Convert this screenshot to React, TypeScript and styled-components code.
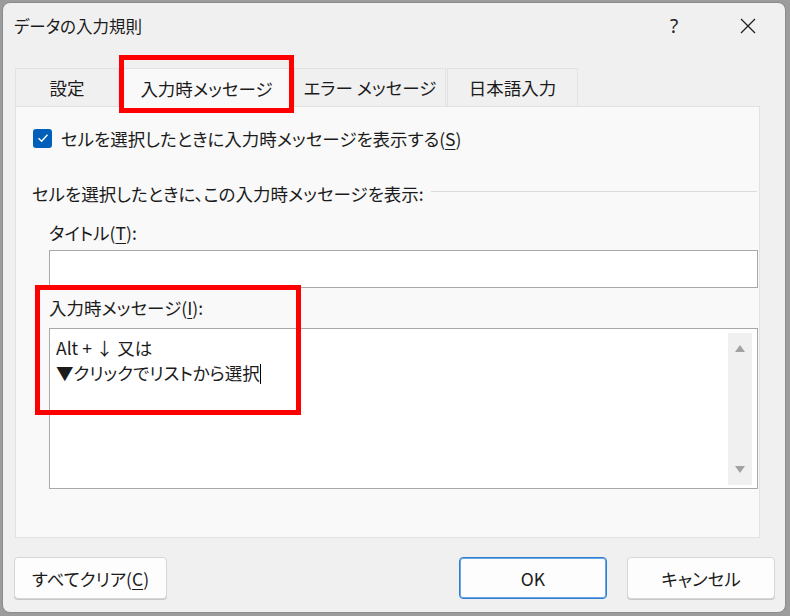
import styled, { createGlobalStyle } from 'styled-components'

const GlobalStyle = createGlobalStyle`
  html, body {
    margin: 0;
    padding: 0;
    background: #9c9c9c;
  }
  body {
    font-family: "Noto Sans CJK JP", "Noto Sans", sans-serif;
    font-feature-settings: "palt";
    color: #1b1b1b;
  }
`

const Window = styled.div`
  box-sizing: border-box;
  width: 784px;
  height: 611px;
  margin: 2px 0 0 2px;
  background: #f0f0f0;
  border: 1px solid #8c8c8c;
  border-radius: 8px;
  display: flex;
  flex-direction: column;
  overflow: hidden;
`

const TitleBar = styled.div`
  height: 45px;
  display: flex;
  align-items: center;
  padding-left: 11px;
`

const Title = styled.div`
  flex: 1;
  font-size: 16.5px;
`

const CaptionButton = styled.div`
  width: 74px;
  height: 45px;
  display: flex;
  align-items: center;
  justify-content: center;
  font-size: 19px;
  font-family: "Noto Sans", sans-serif;
  color: #222;
`

const TabRow = styled.div`
  display: flex;
  margin: 20px 0 0 12px;
  height: 38px;
`

const Tab = styled.div<{ $w: number; $active?: boolean }>`
  position: relative;
  box-sizing: border-box;
  width: ${({ $w }) => $w}px;
  height: ${({ $active }) => ($active ? 39 : 38)}px;
  display: flex;
  align-items: center;
  justify-content: center;
  font-size: 17.5px;
  background: ${({ $active }) => ($active ? '#f9f9f9' : '#f0f0f0')};
  border: 1px solid #e2e2e2;
  border-bottom: none;
  margin-right: 1px;
  z-index: ${({ $active }) => ($active ? 1 : 0)};
`

const Annotation = styled.div<{ $l: number; $t: number; $w: number; $h: number }>`
  position: absolute;
  box-sizing: border-box;
  left: ${({ $l }) => $l}px;
  top: ${({ $t }) => $t}px;
  width: ${({ $w }) => $w}px;
  height: ${({ $h }) => $h}px;
  border: 5px solid #ff0000;
  pointer-events: none;
  z-index: 5;
`

const Panel = styled.div`
  box-sizing: border-box;
  width: 745px;
  height: 432px;
  margin-left: 12px;
  background: #f9f9f9;
  border: 1px solid #e2e2e2;
  padding: 21px 1px 0 17px;
`

const CheckRow = styled.label`
  display: flex;
  align-items: center;
  height: 20px;
  font-size: 17.5px;
`

const CheckBox = styled.span`
  box-sizing: border-box;
  width: 19px;
  height: 19px;
  border-radius: 3px;
  background: #005fb8;
  display: flex;
  align-items: center;
  justify-content: center;
  margin-right: 9px;
`

const Key = styled.span`
  text-decoration: underline;
  text-underline-offset: 3px;
  text-decoration-thickness: 1px;
`

const GroupHeading = styled.div`
  display: flex;
  align-items: center;
  margin: 33px 0 0 -1px;
  height: 24px;
  font-size: 17.5px;
`

const GroupLine = styled.div`
  flex: 1;
  height: 1px;
  background: #dcdcdc;
  margin: 0 1px 3px 7px;
`

const Indented = styled.div`
  margin-left: 16px;
`

const FieldLabel = styled.div<{ $top: number }>`
  height: 24px;
  line-height: 24px;
  margin-top: ${({ $top }) => $top}px;
  font-size: 17.5px;
`

const TextBox = styled.div<{ $h: number; $top: number }>`
  position: relative;
  box-sizing: border-box;
  height: ${({ $h }) => $h}px;
  margin-top: ${({ $top }) => $top}px;
  background: #ffffff;
  border: 1px solid #a8a8a8;
`

const MessageSection = styled.div`
  position: relative;
`

const MessageText = styled.div`
  padding: 6px 0 0 6px;
  font-size: 17.5px;
  line-height: 25px;
`

const Caret = styled.span`
  display: inline-block;
  width: 1px;
  height: 20px;
  background: #000;
  vertical-align: -4px;
`

const ScrollTrack = styled.div`
  position: absolute;
  top: 4px;
  bottom: 3px;
  right: 5px;
  width: 24px;
  background: #f0f0f0;
  display: flex;
  flex-direction: column;
  justify-content: space-between;
  align-items: center;
  padding: 11px 0;
  box-sizing: border-box;
`

const ButtonRow = styled.div`
  display: flex;
  margin-top: 19px;
  padding: 0 10px 0 11px;
`

const Button = styled.div<{ $w: number; $primary?: boolean }>`
  box-sizing: border-box;
  width: ${({ $w }) => $w}px;
  height: 42px;
  display: flex;
  align-items: center;
  justify-content: center;
  background: #fdfdfd;
  border: 1px solid ${({ $primary }) => ($primary ? '#2f7ed2' : '#d6d6d6')};
  box-shadow: ${({ $primary }) => ($primary ? 'inset 0 0 0 1px #6aa6e2' : '0 1px 0 #c8c8c8')};
  border-radius: 4px;
  font-size: 17.5px;
`

const Spacer = styled.div`
  flex: 1;
`

const Arrow = ({ up }: { up?: boolean }) => (
  <svg width="12" height="9" viewBox="0 0 12 9">
    <path d={up ? 'M6 1 L11 8 L1 8 Z' : 'M1 1 L11 1 L6 8 Z'} fill="#a2a2a2" />
  </svg>
)

export default function App() {
  return (
    <>
      <GlobalStyle />
      <Window>
        <TitleBar>
          <Title>データの入力規則</Title>
          <CaptionButton>?</CaptionButton>
          <CaptionButton>
            <svg width="18" height="18" viewBox="0 0 18 18">
              <path d="M2 2 L16 16 M16 2 L2 16" stroke="#1f1f1f" strokeWidth="1.3" />
            </svg>
          </CaptionButton>
        </TitleBar>

        <TabRow>
          <Tab $w={104}>設定</Tab>
          <Tab $w={173} $active>
            入力時メッセージ
            <Annotation $l={-2} $t={-14} $w={175} $h={58} />
          </Tab>
          <Tab $w={152}>エラー メッセージ</Tab>
          <Tab $w={131}>日本語入力</Tab>
        </TabRow>

        <Panel>
          <CheckRow>
            <CheckBox>
              <svg width="12" height="10" viewBox="0 0 12 10">
                <path d="M1.5 5.2 L4.6 8.2 L10.5 1.8" stroke="#fff" strokeWidth="1.4" fill="none" />
              </svg>
            </CheckBox>
            セルを選択したときに入力時メッセージを表示する(<Key>S</Key>)
          </CheckRow>

          <GroupHeading>
            セルを選択したときに、この入力時メッセージを表示:
            <GroupLine />
          </GroupHeading>

          <Indented>
            <FieldLabel $top={16}>
              タイトル(<Key>T</Key>):
            </FieldLabel>
            <TextBox $h={38} $top={5} />

            <MessageSection>
              <FieldLabel $top={8}>
                入力時メッセージ(<Key>I</Key>):
              </FieldLabel>
              <TextBox $h={161} $top={8}>
                <MessageText>
                  Alt + ↓ 又は
                  <br />
                  ▼クリックでリストから選択
                  <Caret />
                </MessageText>
                <ScrollTrack>
                  <Arrow up />
                  <Arrow />
                </ScrollTrack>
              </TextBox>
              <Annotation $l={-14} $t={-11} $w={266} $h={130} />
            </MessageSection>
          </Indented>
        </Panel>

        <ButtonRow>
          <Button $w={153}>
            すべてクリア(<Key>C</Key>)
          </Button>
          <Spacer />
          <Button $w={148} $primary>
            OK
          </Button>
          <Button $w={148} style={{ marginLeft: 20 }}>
            キャンセル
          </Button>
        </ButtonRow>
      </Window>
    </>
  )
}
